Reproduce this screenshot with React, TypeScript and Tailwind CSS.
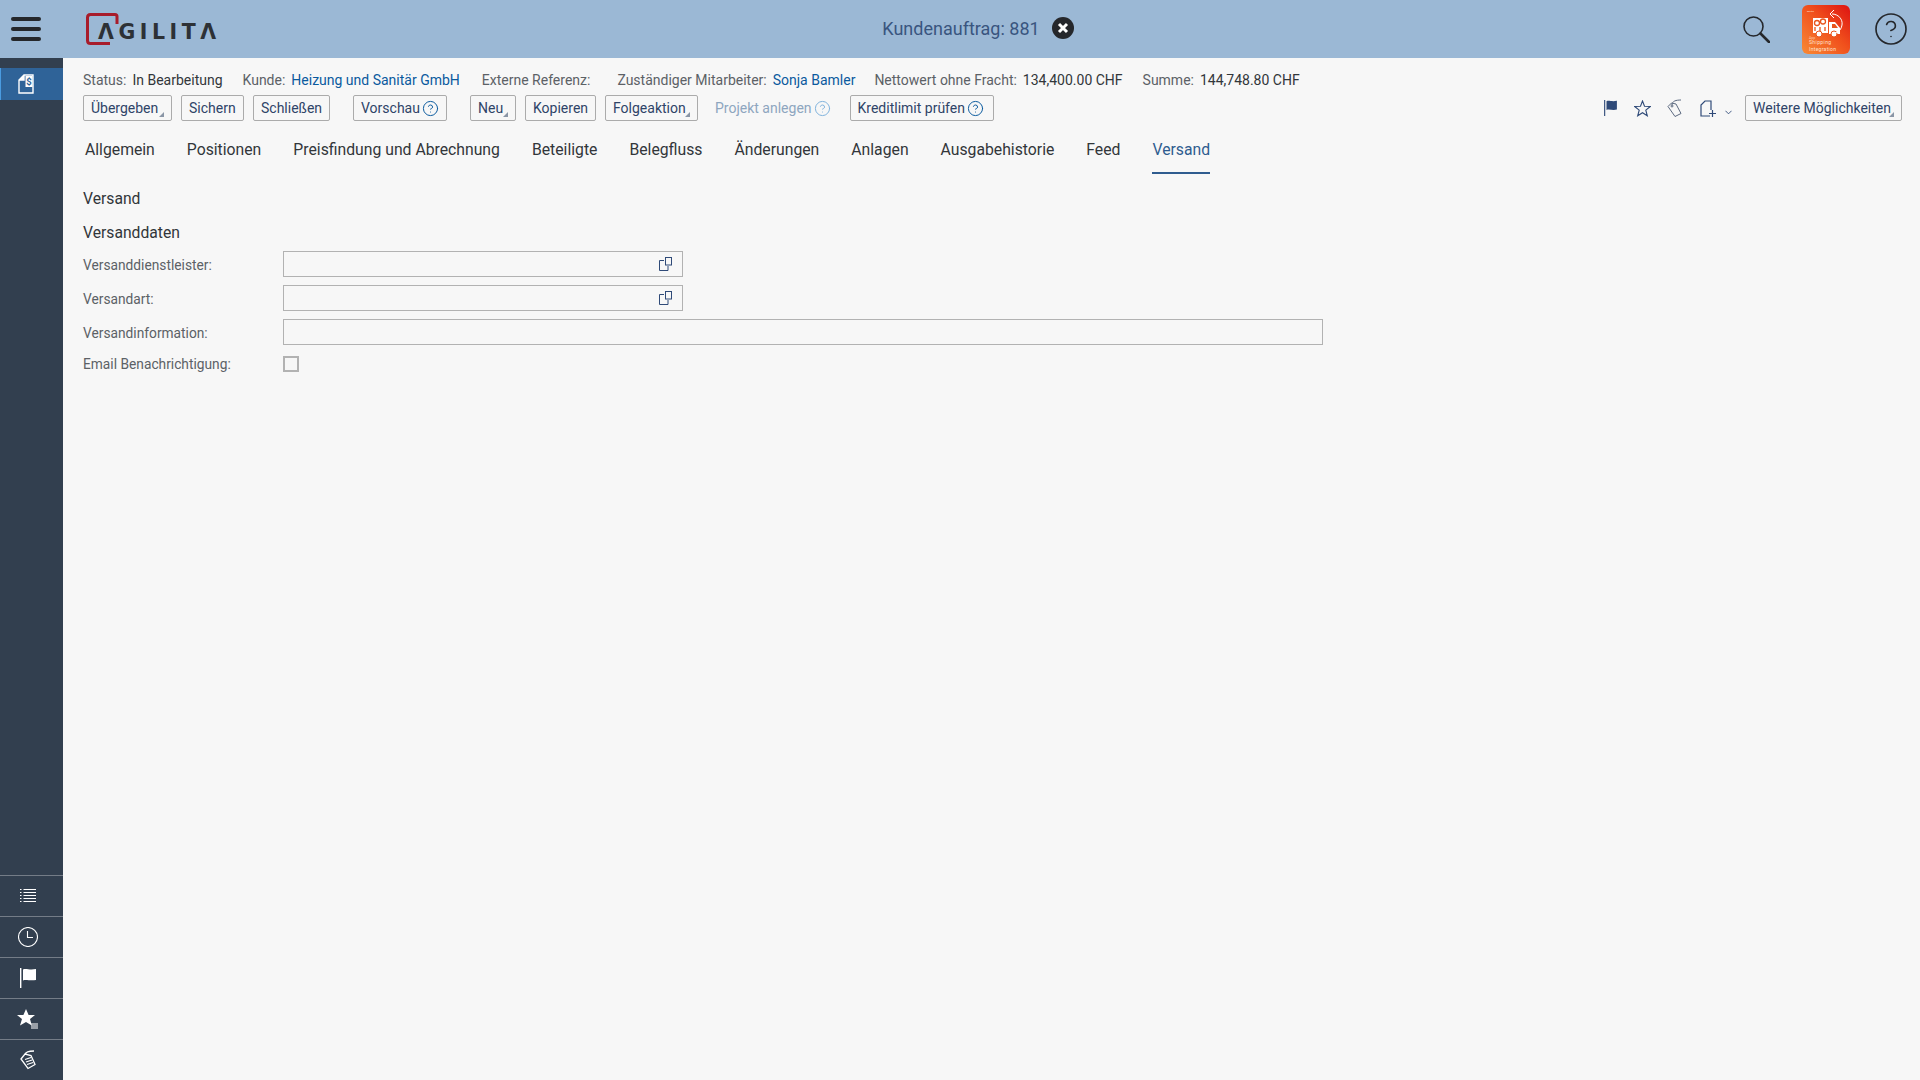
import { CircleHelp } from "lucide-react";

const tabs = [
  "Allgemein",
  "Positionen",
  "Preisfindung und Abrechnung",
  "Beteiligte",
  "Belegfluss",
  "Änderungen",
  "Anlagen",
  "Ausgabehistorie",
  "Feed",
  "Versand",
];

const FlagIcon = ({ className = "" }: { className?: string }) => (
  <svg viewBox="0 0 16 20" className={className} fill="currentColor">
    <rect x="0" y="0" width="1.4" height="20" />
    <path d="M3 1.5c3-1.5 6 .8 13-.5v11c-6 1.200-10-1-13 .5z" />
  </svg>
);

const ValueHelpIcon = () => (
  <svg viewBox="0 0 14 14" className="w-[14px] h-[14px] text-[#2f4a78]" fill="none" stroke="currentColor" strokeWidth="1">
    <path d="M5 3.5H.5v10h8.500V9" />
    <rect x="6.500" y=".5" width="6" height="7.500" />
  </svg>
);

const Corner = () => (
  <span className="absolute right-[7px] bottom-[3px] w-0 h-0 border-l-[5px] border-l-transparent border-b-[5px] border-b-[#8a96a6]" />
);

const Btn = ({ label, w, menu, help, className = "" }: { label: string; w: number; menu?: boolean; help?: boolean; className?: string }) => (
  <button
    style={{ width: w }}
    className={`relative h-[26px] shrink-0 flex items-center justify-start pl-[7px] gap-[2px] border border-[#ababab] rounded-[2px] text-[14px] text-[#2f4468] ${className}`}
  >
    <span>{label}</span>
    {help && <CircleHelp className="w-[17px] h-[17px] text-[#0a5a9e]" strokeWidth={1.4} />}
    {menu && <Corner />}
  </button>
);

const Info = ({ k, v, link, className = "" }: { k: string; v?: string; link?: boolean; className?: string }) => (
  <span className={`flex gap-[6px] ${className}`}>
    <span className="text-[#5c6166]">{k}</span>
    {v && <span className={link ? "text-[#0a5a9e]" : "text-[#32363a]"}>{v}</span>}
  </span>
);

const SideBtn = ({ children }: { children: React.ReactNode }) => (
  <div className="h-[41px] pr-[7px] border-t border-[#747c87] flex items-center justify-center text-white">{children}</div>
);

export default function App() {
  return (
    <div className="w-[1920px] h-[1080px] overflow-hidden flex flex-col bg-[#f7f7f7] font-[Roboto,sans-serif] text-[14px] text-[#32363a]">
      <header className="h-[58px] shrink-0 bg-[#9bb8d5] grid grid-cols-[1fr_auto_1fr] items-center">
        <div className="flex items-center">
          <div className="ml-[11px] w-[30px] flex flex-col gap-[6px]">
            <span className="h-[4px] rounded-full bg-[#25272b]" />
            <span className="h-[4px] rounded-full bg-[#25272b]" />
            <span className="h-[4px] rounded-full bg-[#25272b]" />
          </div>
          <svg viewBox="0 0 132 32" className="ml-[45px] w-[132px] h-[32px]">
            <path d="M31 11V3.500Q31 1.500 29 1.500H4.500Q1.500 1.500 1.500 4.500V27.500Q1.500 30.500 4.500 30.500H24" fill="none" stroke="#a81c2b" strokeWidth="3" />
            <text x="12" y="26" fontFamily="DejaVu Sans, sans-serif" fontWeight="700" fontSize="20.500" fill="#2d3136" textLength="118" lengthAdjust="spacing">ΛGILITΛ</text>
          </svg>
        </div>
        <div className="ml-[36px] -mt-[2px] flex items-center gap-[12px]">
          <span className="text-[18px] text-[#39557f]">Kundenauftrag: 881</span>
          <svg viewBox="0 0 22 22" className="w-[22px] h-[22px]">
            <circle cx="11" cy="11" r="11" fill="#25272b" />
            <path d="M7 7l8 8M15 7l-8 8" stroke="#fff" strokeWidth="3" />
          </svg>
        </div>
        <div className="flex items-center justify-end">
          <svg viewBox="0 0 27 27" className="w-[27px] h-[27px] text-[#25272b]" fill="none" stroke="currentColor">
            <circle cx="10.500" cy="10.500" r="9.500" strokeWidth="1.600" />
            <path d="M17.500 17.500 26 26" strokeWidth="2.600" strokeLinecap="round" />
          </svg>
          <svg viewBox="0 0 48 49" className="ml-[32px] w-[48px] h-[49px]">
            <defs>
              <linearGradient id="appLogo" x1="0" y1="1" x2="1" y2="0">
                <stop offset="0" stopColor="#f98a35" />
                <stop offset="0.55" stopColor="#f04f1c" />
                <stop offset="1" stopColor="#dd1212" />
              </linearGradient>
            </defs>
            <rect width="48" height="49" rx="6" fill="url(#appLogo)" />
            <text x="5" y="6.500" fontSize="2.500" fill="#ffe3cf" fontFamily="Roboto, sans-serif">agilita</text>
            <rect x="11" y="13" width="15" height="15" fill="#fff" />
            <path d="M27 17h6l5 6v6H27z" fill="#fff" />
            <path d="M30 19h3l3 4h-6z" fill="#e8541c" />
            <circle cx="15" cy="18" r="2.500" fill="none" stroke="#e8541c" strokeWidth="1.300" />
            <circle cx="21" cy="16.500" r="2.500" fill="none" stroke="#e8541c" strokeWidth="1.300" />
            <path d="M13 22v4M18 22v4M23 22v4" stroke="#e8541c" strokeWidth="1.300" />
            <circle cx="17" cy="29" r="3" fill="#fff" stroke="#e8541c" />
            <circle cx="32" cy="29" r="3" fill="#fff" stroke="#e8541c" />
            <path d="M30 9c6 0 11 5 10 11-.5 4-3 7-7 8" fill="none" stroke="#fff" strokeWidth="1" />
            <path d="M32 5l-4 4 4 4" fill="none" stroke="#fff" strokeWidth="1" />
            <text x="7" y="33.500" fontSize="3.500" fill="#ffc9a8" fontFamily="Roboto, sans-serif">App</text>
            <text x="7" y="39" fontSize="5" letterSpacing=".4" fill="#ffe3cf" fontFamily="Roboto, sans-serif">Shipping</text>
            <text x="7" y="46" fontSize="5" letterSpacing=".3" fill="#ffe3cf" fontFamily="Roboto, sans-serif">Integration</text>
          </svg>
          <CircleHelp className="ml-[23px] mr-[11px] w-[36px] h-[36px] text-[#25272b]" strokeWidth={1.1} />
        </div>
      </header>

      <div className="flex-1 flex min-h-0">
        <aside className="w-[63px] shrink-0 bg-[#323f4f] flex flex-col justify-between">
          <div className="pt-[10px]">
            <div className="h-[32px] pr-[13px] bg-[#2f6398] border-l border-[#4a9be0] flex items-center justify-center text-white">
              <svg viewBox="0 0 16 20" className="w-[16px] h-[20px]" fill="none" stroke="currentColor" strokeWidth="1.400">
                <path d="M6 1h9v18H1V6z" />
                <path d="M1 6h5V1" fill="currentColor" />
                <rect x="7.500" y="2" width="7" height="11" fill="currentColor" stroke="none" />
                <text x="8.300" y="11" fontSize="9.500" fontWeight="700" fill="#2f6398" stroke="none">$</text>
              </svg>
            </div>
          </div>
          <div>
            <SideBtn>
              <svg viewBox="0 0 16 16" className="w-[16px] h-[16px]" fill="none" stroke="currentColor">
                {[1.500, 4.500, 7.500, 10.500, 13.500].map((y) => (
                  <path key={y} d="M0 0h1.500M3.500 0H16" transform={`translate(0 ${y})`} />
                ))}
              </svg>
            </SideBtn>
            <SideBtn>
              <svg viewBox="0 0 20 20" className="w-[20px] h-[20px]" fill="none" stroke="currentColor" strokeWidth="1.100">
                <circle cx="10" cy="10" r="9.500" />
                <path d="M9.500 4v6.500H15" />
              </svg>
            </SideBtn>
            <SideBtn>
              <FlagIcon className="w-[16px] h-[20px]" />
            </SideBtn>
            <SideBtn>
              <svg viewBox="0 0 22 20" className="w-[22px] h-[20px]" fill="currentColor">
                <path d="M9 0l2.600 6H18l-5 4 1.800 6.500L9 13l-6 3.500L5 10 0 6h6.400z" />
                <path d="M14 14.500h7v1h-7zM14 16.500h7v1h-7zM14 18.500h7v1h-7z" />
              </svg>
            </SideBtn>
            <SideBtn>
              <svg viewBox="0 0 16 20" className="w-[16px] h-[20px]" fill="none" stroke="currentColor" strokeWidth="1.300">
                <path d="M1 9l4-5 6 1.500 4 9-7 4z" />
                <path d="M5 9.500l6-2M6 12l6-2M7 14.500l6-2" />
                <path d="M5 5C5 2 9 1 14 1" />
              </svg>
            </SideBtn>
          </div>
        </aside>

        <main className="flex-1 pl-[20px] pr-[18px] pt-[12px] min-w-0">
          <div className="h-[20px] flex items-center text-[14px] leading-[20px]">
            <Info k="Status:" v="In Bearbeitung" />
            <Info k="Kunde:" v="Heizung und Sanitär GmbH" link className="ml-[20px]" />
            <Info k="Externe Referenz:" className="ml-[22px]" />
            <Info k="Zuständiger Mitarbeiter:" v="Sonja Bamler" link className="ml-[27px]" />
            <Info k="Nettowert ohne Fracht:" v="134,400.00 CHF" className="ml-[19px]" />
            <Info k="Summe:" v="144,748.80 CHF" className="ml-[20px]" />
          </div>

          <div className="mt-[5px] h-[26px] flex items-center">
            <Btn label="Übergeben" w={89} menu />
            <Btn label="Sichern" w={63} className="ml-[9px]" />
            <Btn label="Schließen" w={77} className="ml-[9px]" />
            <Btn label="Vorschau" w={94} help className="ml-[23px]" />
            <Btn label="Neu" w={46} menu className="ml-[23px]" />
            <Btn label="Kopieren" w={71} className="ml-[9px]" />
            <Btn label="Folgeaktion" w={93} menu className="ml-[9px]" />
            <span className="ml-[17px] flex items-center gap-[2px] text-[#8ea6bf]">
              Projekt anlegen
              <CircleHelp className="w-[17px] h-[17px] text-[#7fb2dc]" strokeWidth={1.4} />
            </span>
            <Btn label="Kreditlimit prüfen" w={144} help className="ml-[19px]" />
            <div className="ml-auto flex items-center text-[#2f4a78]">
              <FlagIcon className="w-[13px] h-[16px]" />
              <svg viewBox="0 0 17 17" className="ml-[17px] w-[17px] h-[17px]" fill="none" stroke="currentColor" strokeWidth="1.100">
                <path d="M8.500 1l2 5.200 5.800.3-4.500 3.700 1.500 5.600-4.800-3.100-4.800 3.100 1.500-5.600L.7 6.500l5.800-.3z" />
              </svg>
              <svg viewBox="0 0 15 18" className="ml-[16px] w-[15px] h-[18px] text-[#5c6a80]" fill="none" stroke="currentColor" strokeWidth="1">
                <path d="M1 7.500 4.500 4l4.500 1 5 9.500-6 3z" />
                <circle cx="5" cy="7" r="1" />
                <path d="M5 6C5 2 9 1 14 1" />
              </svg>
              <svg viewBox="0 0 16 17" className="ml-[18px] w-[16px] h-[17px]" fill="none" stroke="currentColor" strokeWidth="1.200">
                <path d="M10 16H1V5l4-4h6v9" />
                <path d="M9 13.500h7M12.500 10v7" />
              </svg>
              <svg viewBox="0 0 8 5" className="ml-[9px] mt-[8px] w-[7px] h-[5px]" fill="none" stroke="currentColor">
                <path d="M.5.500 4 4 7.500.500" />
              </svg>
              <Btn label="Weitere Möglichkeiten" w={157} menu className="ml-[13px]" />
            </div>
          </div>

          <nav className="mt-[19px] flex gap-[32px] pl-[2px] text-[15.75px] leading-[20px]">
            {tabs.map((t) => (
              <span key={t} className={t === "Versand" ? "pb-[12px] border-b-2 border-[#2f5c8f] text-[#2f5c8f]" : "pb-[14px]"}>
                {t}
              </span>
            ))}
          </nav>

          <h2 className="mt-[15px] text-[15.7px] leading-[20px]">Versand</h2>
          <h3 className="mt-[14px] text-[15.7px] leading-[20px]">Versanddaten</h3>

          <div className="mt-[8px] flex flex-col gap-[8px] text-[13.75px] text-[#5c6166]">
            <div className="flex items-center h-[26px]">
              <span className="w-[200px] pt-[2px]">Versanddienstleister:</span>
              <div className="w-[400px] h-[26px] border border-[#b2b2b2] flex items-center justify-end pr-[9px]">
                <ValueHelpIcon />
              </div>
            </div>
            <div className="flex items-center h-[26px]">
              <span className="w-[200px] pt-[2px]">Versandart:</span>
              <div className="w-[400px] h-[26px] border border-[#b2b2b2] flex items-center justify-end pr-[9px]">
                <ValueHelpIcon />
              </div>
            </div>
            <div className="flex items-center h-[26px]">
              <span className="w-[200px] pt-[2px]">Versandinformation:</span>
              <div className="w-[1040px] h-[26px] border border-[#b2b2b2]" />
            </div>
            <div className="-mt-[1px] flex items-center h-[23px]">
              <span className="w-[200px] pt-[2px]">Email Benachrichtigung:</span>
              <div className="w-[16px] h-[16px] border-2 border-[#b2b2b2]" />
            </div>
          </div>
        </main>
      </div>
    </div>
  );
}
